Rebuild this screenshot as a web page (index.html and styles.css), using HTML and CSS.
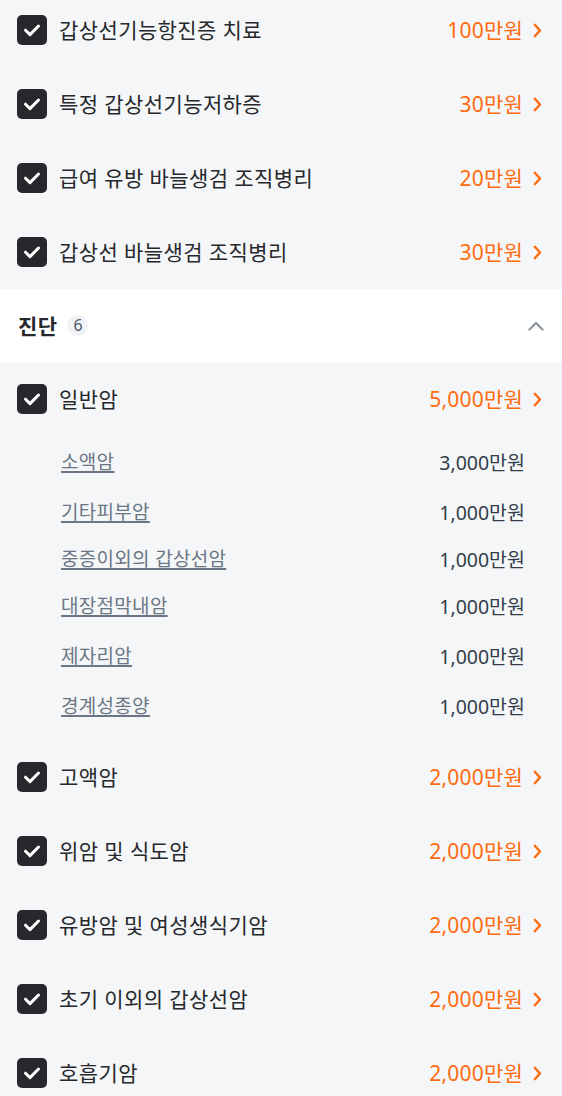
FILE: index.html
```html
<!DOCTYPE html>
<html lang="ko">
<head>
<meta charset="utf-8">
<link rel="stylesheet" href="styles.css">
</head>
<body>
<div class="page">
  <div class="list list-top">
    <div class="row">
      <span class="check"><svg viewBox="0 0 30 30" width="30" height="30"><path d="M8.5 15.2l4.5 4.4 8.5-8.6" fill="none" stroke="#fff" stroke-width="3" stroke-linecap="round" stroke-linejoin="round"/></svg></span>
      <span class="label">갑상선기능항진증 치료</span>
      <span class="amount">100만원<svg class="chev" viewBox="0 0 9 15" width="9" height="15"><path d="M1.8 1.8l5.2 5.7-5.2 5.7" fill="none" stroke="currentColor" stroke-width="2.4" stroke-linecap="round" stroke-linejoin="round"/></svg></span>
    </div>
    <div class="row">
      <span class="check"><svg viewBox="0 0 30 30" width="30" height="30"><path d="M8.5 15.2l4.5 4.4 8.5-8.6" fill="none" stroke="#fff" stroke-width="3" stroke-linecap="round" stroke-linejoin="round"/></svg></span>
      <span class="label">특정 갑상선기능저하증</span>
      <span class="amount">30만원<svg class="chev" viewBox="0 0 9 15" width="9" height="15"><path d="M1.8 1.8l5.2 5.7-5.2 5.7" fill="none" stroke="currentColor" stroke-width="2.4" stroke-linecap="round" stroke-linejoin="round"/></svg></span>
    </div>
    <div class="row">
      <span class="check"><svg viewBox="0 0 30 30" width="30" height="30"><path d="M8.5 15.2l4.5 4.4 8.5-8.6" fill="none" stroke="#fff" stroke-width="3" stroke-linecap="round" stroke-linejoin="round"/></svg></span>
      <span class="label">급여 유방 바늘생검 조직병리</span>
      <span class="amount">20만원<svg class="chev" viewBox="0 0 9 15" width="9" height="15"><path d="M1.8 1.8l5.2 5.7-5.2 5.7" fill="none" stroke="currentColor" stroke-width="2.4" stroke-linecap="round" stroke-linejoin="round"/></svg></span>
    </div>
    <div class="row">
      <span class="check"><svg viewBox="0 0 30 30" width="30" height="30"><path d="M8.5 15.2l4.5 4.4 8.5-8.6" fill="none" stroke="#fff" stroke-width="3" stroke-linecap="round" stroke-linejoin="round"/></svg></span>
      <span class="label">갑상선 바늘생검 조직병리</span>
      <span class="amount">30만원<svg class="chev" viewBox="0 0 9 15" width="9" height="15"><path d="M1.8 1.8l5.2 5.7-5.2 5.7" fill="none" stroke="currentColor" stroke-width="2.4" stroke-linecap="round" stroke-linejoin="round"/></svg></span>
    </div>
  </div>

  <div class="section-head">
    <span class="title">진단</span>
    <span class="badge">6</span>
    <svg class="chev-up" viewBox="0 0 16 10" width="16" height="10"><path d="M1.5 8.5L8 2l6.5 6.5" fill="none" stroke="#8b95a1" stroke-width="2.2" stroke-linecap="round" stroke-linejoin="round"/></svg>
  </div>

  <div class="list">
    <div class="row">
      <span class="check"><svg viewBox="0 0 30 30" width="30" height="30"><path d="M8.5 15.2l4.5 4.4 8.5-8.6" fill="none" stroke="#fff" stroke-width="3" stroke-linecap="round" stroke-linejoin="round"/></svg></span>
      <span class="label">일반암</span>
      <span class="amount">5,000만원<svg class="chev" viewBox="0 0 9 15" width="9" height="15"><path d="M1.8 1.8l5.2 5.7-5.2 5.7" fill="none" stroke="currentColor" stroke-width="2.4" stroke-linecap="round" stroke-linejoin="round"/></svg></span>
    </div>
    <div class="sublist">
      <div class="sub"><span class="sub-label">소액암</span><span class="sub-amount">3,000만원</span></div>
      <div class="sub"><span class="sub-label">기타피부암</span><span class="sub-amount">1,000만원</span></div>
      <div class="sub sub-short"><span class="sub-label">중증이외의 갑상선암</span><span class="sub-amount">1,000만원</span></div>
      <div class="sub"><span class="sub-label">대장점막내암</span><span class="sub-amount">1,000만원</span></div>
      <div class="sub"><span class="sub-label">제자리암</span><span class="sub-amount">1,000만원</span></div>
      <div class="sub"><span class="sub-label">경계성종양</span><span class="sub-amount">1,000만원</span></div>
    </div>
    <div class="row">
      <span class="check"><svg viewBox="0 0 30 30" width="30" height="30"><path d="M8.5 15.2l4.5 4.4 8.5-8.6" fill="none" stroke="#fff" stroke-width="3" stroke-linecap="round" stroke-linejoin="round"/></svg></span>
      <span class="label">고액암</span>
      <span class="amount">2,000만원<svg class="chev" viewBox="0 0 9 15" width="9" height="15"><path d="M1.8 1.8l5.2 5.7-5.2 5.7" fill="none" stroke="currentColor" stroke-width="2.4" stroke-linecap="round" stroke-linejoin="round"/></svg></span>
    </div>
    <div class="row">
      <span class="check"><svg viewBox="0 0 30 30" width="30" height="30"><path d="M8.5 15.2l4.5 4.4 8.5-8.6" fill="none" stroke="#fff" stroke-width="3" stroke-linecap="round" stroke-linejoin="round"/></svg></span>
      <span class="label">위암 및 식도암</span>
      <span class="amount">2,000만원<svg class="chev" viewBox="0 0 9 15" width="9" height="15"><path d="M1.8 1.8l5.2 5.7-5.2 5.7" fill="none" stroke="currentColor" stroke-width="2.4" stroke-linecap="round" stroke-linejoin="round"/></svg></span>
    </div>
    <div class="row">
      <span class="check"><svg viewBox="0 0 30 30" width="30" height="30"><path d="M8.5 15.2l4.5 4.4 8.5-8.6" fill="none" stroke="#fff" stroke-width="3" stroke-linecap="round" stroke-linejoin="round"/></svg></span>
      <span class="label">유방암 및 여성생식기암</span>
      <span class="amount">2,000만원<svg class="chev" viewBox="0 0 9 15" width="9" height="15"><path d="M1.8 1.8l5.2 5.7-5.2 5.7" fill="none" stroke="currentColor" stroke-width="2.4" stroke-linecap="round" stroke-linejoin="round"/></svg></span>
    </div>
    <div class="row">
      <span class="check"><svg viewBox="0 0 30 30" width="30" height="30"><path d="M8.5 15.2l4.5 4.4 8.5-8.6" fill="none" stroke="#fff" stroke-width="3" stroke-linecap="round" stroke-linejoin="round"/></svg></span>
      <span class="label">초기 이외의 갑상선암</span>
      <span class="amount">2,000만원<svg class="chev" viewBox="0 0 9 15" width="9" height="15"><path d="M1.8 1.8l5.2 5.7-5.2 5.7" fill="none" stroke="currentColor" stroke-width="2.4" stroke-linecap="round" stroke-linejoin="round"/></svg></span>
    </div>
    <div class="row">
      <span class="check"><svg viewBox="0 0 30 30" width="30" height="30"><path d="M8.5 15.2l4.5 4.4 8.5-8.6" fill="none" stroke="#fff" stroke-width="3" stroke-linecap="round" stroke-linejoin="round"/></svg></span>
      <span class="label">호흡기암</span>
      <span class="amount">2,000만원<svg class="chev" viewBox="0 0 9 15" width="9" height="15"><path d="M1.8 1.8l5.2 5.7-5.2 5.7" fill="none" stroke="currentColor" stroke-width="2.4" stroke-linecap="round" stroke-linejoin="round"/></svg></span>
    </div>
  </div>
</div>
</body>
</html>
```

FILE: styles.css
```css
html, body {
  margin: 0;
  padding: 0;
  background: #f5f6f8;
}
body {
  font-family: "Noto Sans", "Noto Sans CJK KR", sans-serif;
  color: #26282c;
  overflow: hidden;
}
.page {
  width: 562px;
}
.list {
  display: flex;
  flex-direction: column;
  background: #f5f6f8;
}
.list-top {
  margin-top: -7px;
}
.row {
  height: 74px;
  display: flex;
  align-items: center;
  padding: 0 20px 0 17px;
  box-sizing: border-box;
}
.check {
  width: 30px;
  height: 30px;
  border-radius: 5px;
  background: #26282c;
  display: flex;
  flex-shrink: 0;
}
.label {
  margin-left: 12px;
  font-size: 21px;
  line-height: 30px;
  color: #26282c;
  flex: 1;
  letter-spacing: 0.4px;
  white-space: nowrap;
}
.amount {
  display: flex;
  align-items: center;
  font-size: 21px;
  line-height: 30px;
  color: #ff6b0f;
  white-space: nowrap;
  letter-spacing: 0.2px;
}
.chev {
  margin-left: 10px;
  display: block;
}
.section-head {
  height: 73px;
  background: #fff;
  display: flex;
  align-items: center;
  padding: 0 18px 0 18px;
  box-sizing: border-box;
}
.title {
  font-size: 21px;
  font-weight: 700;
  color: #26282c;
  line-height: 30px;
  letter-spacing: 0.4px;
}
.badge {
  margin-left: 10px;
  width: 21px;
  height: 21px;
  border-radius: 50%;
  background: #f0f2f5;
  color: #4e5968;
  font-size: 16px;
  line-height: 21px;
  text-align: center;
}
.chev-up {
  margin-left: auto;
  display: block;
}
.sublist {
  display: flex;
  flex-direction: column;
  padding: 0 37px 10px 61px;
}
.sub {
  height: 50px;
  display: flex;
  align-items: center;
  justify-content: space-between;
}
.sub-short {
  height: 44px;
}
.sub-label {
  font-size: 19px;
  color: #6b7684;
  text-decoration: underline;
  text-decoration-thickness: 2px;
  text-underline-offset: 2px;
  letter-spacing: 0.3px;
  white-space: nowrap;
}
.sub-amount {
  font-size: 19.5px;
  color: #333d4b;
  white-space: nowrap;
}
```
